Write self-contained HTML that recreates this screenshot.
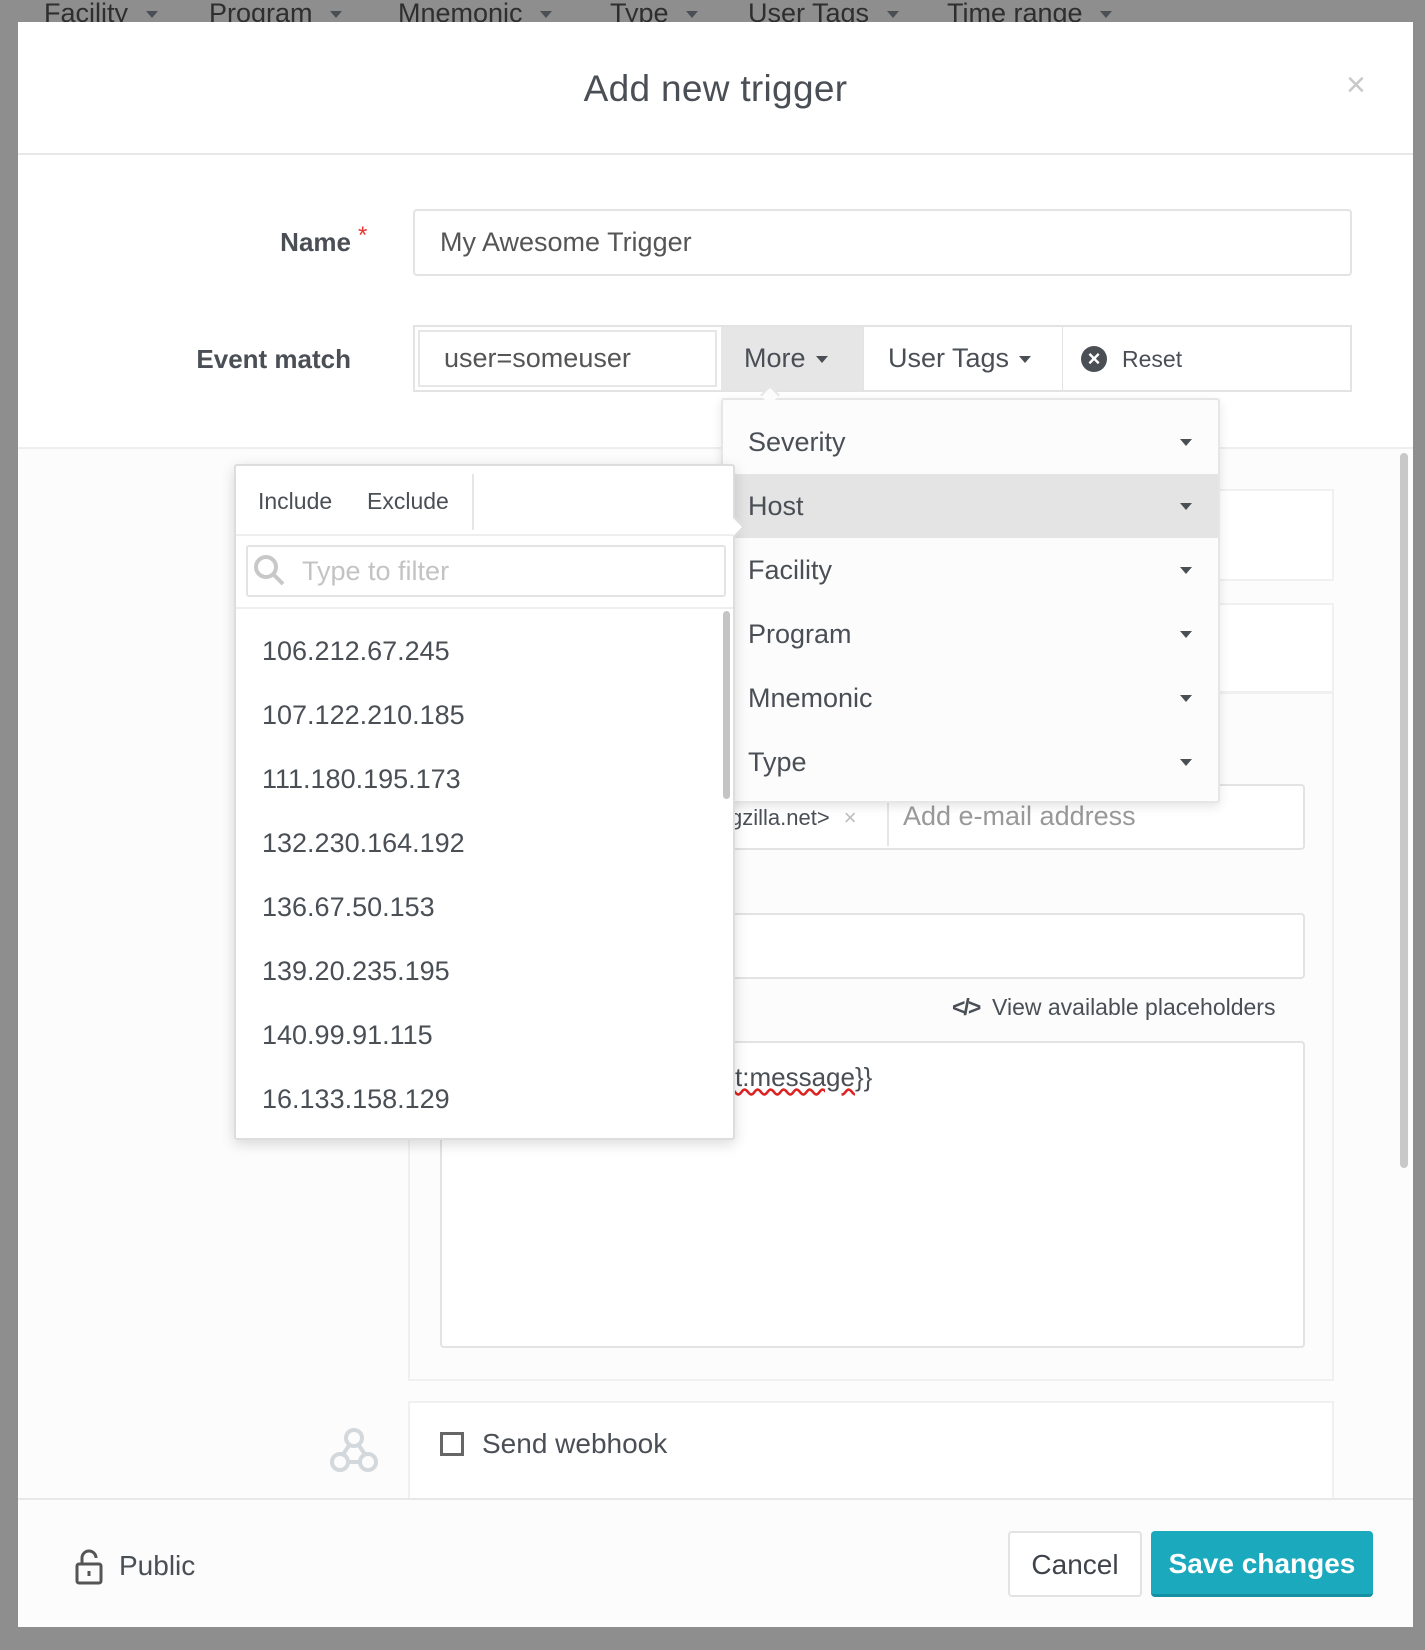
<!DOCTYPE html>
<html><head><meta charset="utf-8"><style>
*{box-sizing:border-box;margin:0;padding:0}
body{width:1425px;height:1650px;background:#8e8e8e;font-family:"Liberation Sans",sans-serif;color:#4a4f56;position:relative;overflow:hidden}
.a{position:absolute}
.bgbar{left:0;top:0;width:1425px;height:22px;background:#8e8e8e;font-size:27px;color:#2e2e2e;overflow:hidden}
.bgbar span{position:absolute;top:-2px;white-space:nowrap}
.modal{left:18px;top:22px;width:1395px;height:1605px;background:#fcfcfc;overflow:hidden}
.inp{border:2px solid #e3e3e3;border-radius:4px;background:#fff}
.caret{display:inline-block;width:0;height:0;border-left:6px solid transparent;border-right:6px solid transparent;border-top:7px solid #4a4f56;vertical-align:middle;margin-left:10px}
.lbl{font-size:26px;font-weight:bold;color:#4a4f56}
.item{position:absolute;left:0;width:100%;height:64px;font-size:27px;padding-left:25px;line-height:64px}
.item .caret{position:absolute;right:26px;top:29px}
.ip{position:absolute;left:26px;font-size:27px;color:#4a4f56}
</style></head><body>
<div class="a bgbar">
<span style="left:44px">Facility <i class="caret"></i></span>
<span style="left:209px">Program <i class="caret"></i></span>
<span style="left:398px">Mnemonic <i class="caret"></i></span>
<span style="left:610px">Type <i class="caret"></i></span>
<span style="left:748px">User Tags <i class="caret"></i></span>
<span style="left:947px">Time range <i class="caret"></i></span>
</div>
<div class="a modal">
 <div class="a" style="left:0;top:0;width:1395px;height:426px;background:#fff"></div>
 <div class="a" style="left:0;top:131px;width:1395px;height:2px;background:#e6e8ea"></div>
 <div class="a" style="left:0;top:0;width:1395px;height:131px;text-align:center;line-height:134px;font-size:37px;color:#4a4f56;letter-spacing:0.3px">Add new trigger</div>
 <div class="a" style="left:1328px;top:44px;font-size:34px;color:#c8c8c8">×</div>
 <div class="a" style="left:0;top:425px;width:1395px;height:2px;background:#eceef0"></div>

 <div class="a lbl" style="right:1062px;top:205px">Name</div>
 <div class="a" style="left:340px;top:200px;color:#e33;font-size:24px">*</div>
 <div class="a inp" style="left:395px;top:187px;width:939px;height:67px;font-size:27px;line-height:63px;padding-left:25px;color:#555">My Awesome Trigger</div>

 <div class="a lbl" style="right:1062px;top:322px">Event match</div>
 <div class="a" style="left:395px;top:303px;width:939px;height:67px;border:2px solid #e3e3e3;background:#fff"></div>
 <div class="a" style="left:400px;top:308px;width:299px;height:57px;border:2px solid #e6e6e6;font-size:27px;line-height:53px;padding-left:24px;color:#555">user=someuser</div>
 <div class="a" style="left:703px;top:305px;width:142px;height:63px;background:#e6e6e6;font-size:27px;line-height:63px;padding-left:23px">More<i class="caret"></i></div>
 <div class="a" style="left:845px;top:305px;width:1px;height:63px;background:#e3e3e3"></div>
 <div class="a" style="left:846px;top:305px;width:198px;height:63px;font-size:27px;line-height:63px;padding-left:24px">User Tags<i class="caret"></i></div>
 <div class="a" style="left:1044px;top:305px;width:1px;height:63px;background:#e3e3e3"></div>
 <div class="a" style="left:1063px;top:324px;width:26px;height:26px;border-radius:50%;background:#4a4f56;color:#fff;font-size:22px;line-height:25px;text-align:center;font-weight:bold">×</div>
 <div class="a" style="left:1104px;top:324px;font-size:23px">Reset</div>

 <!-- background content -->
 <div class="a" style="left:390px;top:467px;width:926px;height:92px;background:#fff;border:2px solid #f0f0f0"></div>
 <div class="a" style="left:390px;top:581px;width:926px;height:90px;background:#fff;border:2px solid #f0f0f0"></div>
 <div class="a" style="left:390px;top:670px;width:926px;height:689px;background:#fcfcfc;border:2px solid #f0f0f0"></div>
 <div class="a inp" style="left:424px;top:762px;width:863px;height:66px"></div>
 <div class="a" style="left:712px;top:783px;font-size:22px">gzilla.net&gt; <span style="color:#bbb;margin-left:8px">×</span></div>
 <div class="a" style="left:869px;top:766px;width:2px;height:58px;background:#e6e6e6"></div>
 <div class="a" style="left:885px;top:779px;font-size:27px;color:#999">Add e-mail address</div>
 <div class="a inp" style="left:424px;top:891px;width:863px;height:66px"></div>
 <div class="a" style="left:934px;top:972px;font-size:23px;color:#4a4f56"><b style="letter-spacing:-2px">&lt;/&gt;</b>&nbsp; View available placeholders</div>
 <div class="a inp" style="left:422px;top:1019px;width:865px;height:307px"></div>
 <div class="a" style="left:717px;top:1040px;font-size:26px"><span style="text-decoration:underline wavy #d22">t:message</span>}}</div>
 <div class="a" style="left:390px;top:1379px;width:926px;height:100px;background:#fff;border:2px solid #f0f0f0"></div>
 <div class="a" style="left:422px;top:1410px;width:24px;height:24px;border:3px solid #666"></div>
 <div class="a" style="left:464px;top:1406px;font-size:28px;color:#4a4f56">Send webhook</div>
 <svg class="a" style="left:310px;top:1402px" width="52" height="52" viewBox="0 0 52 52" fill="none" stroke="#d3d8dd" stroke-width="4"><circle cx="26" cy="14" r="8"/><circle cx="12" cy="38" r="8"/><circle cx="40" cy="38" r="8"/><path d="M22 20 L14 32 M20 38 H34 M30 20 L38 32"/></svg>

 <!-- More menu -->
 <div class="a" style="left:703px;top:376px;width:499px;height:405px;background:#fcfcfc;border:2px solid #e6e6e6;border-radius:3px;box-shadow:0 4px 10px rgba(0,0,0,.1)">
  <div class="item" style="top:10px">Severity<i class="caret"></i></div>
  <div class="item" style="top:74px;background:#e4e4e4">Host<i class="caret"></i></div>
  <div class="item" style="top:138px">Facility<i class="caret"></i></div>
  <div class="item" style="top:202px">Program<i class="caret"></i></div>
  <div class="item" style="top:266px">Mnemonic<i class="caret"></i></div>
  <div class="item" style="top:330px">Type<i class="caret"></i></div>
 </div>
 <div class="a" style="left:745px;top:366px;width:14px;height:14px;background:#fcfcfc;border-left:2px solid #e6e6e6;border-top:2px solid #e6e6e6;transform:rotate(45deg)"></div>

 <!-- filter popup -->
 <div class="a" style="left:216px;top:442px;width:501px;height:676px;background:#fff;border:2px solid #ddd;border-radius:3px;box-shadow:0 4px 14px rgba(0,0,0,.15)">
  <div class="a" style="left:22px;top:22px;font-size:23px;color:#4a4f56">Include</div>
  <div class="a" style="left:131px;top:22px;font-size:23px;color:#4a4f56">Exclude</div>
  <div class="a" style="left:236px;top:8px;width:2px;height:56px;background:#e6e6e6"></div>
  <div class="a" style="left:0;top:68px;width:100%;height:2px;background:#eee"></div>
  <div class="a inp" style="left:10px;top:79px;width:480px;height:52px;border-radius:3px"></div>
  <svg class="a" style="left:17px;top:88px" width="34" height="34" viewBox="0 0 34 34" fill="none" stroke="#c8c8c8" stroke-width="4"><circle cx="13" cy="13" r="10"/><path d="M20 20 L30 30"/></svg>
  <div class="a" style="left:66px;top:90px;font-size:27px;color:#c3c3c3">Type to filter</div>
  <div class="a" style="left:0;top:141px;width:100%;height:2px;background:#eee"></div>
  <div class="a" style="left:487px;top:145px;width:7px;height:188px;background:#c4c4c4;border-radius:4px"></div>
  <div class="ip" style="top:170px">106.212.67.245</div>
  <div class="ip" style="top:234px">107.122.210.185</div>
  <div class="ip" style="top:298px">111.180.195.173</div>
  <div class="ip" style="top:362px">132.230.164.192</div>
  <div class="ip" style="top:426px">136.67.50.153</div>
  <div class="ip" style="top:490px">139.20.235.195</div>
  <div class="ip" style="top:554px">140.99.91.115</div>
  <div class="ip" style="top:618px">16.133.158.129</div>
 </div>
 <div class="a" style="left:710px;top:498px;width:14px;height:14px;background:#fff;border-right:2px solid #ddd;border-top:2px solid #ddd;transform:rotate(45deg)"></div>

 <div class="a" style="left:1382px;top:431px;width:8px;height:715px;background:#c8c8c8;border-radius:4px"></div>

 <!-- footer -->
 <div class="a" style="left:0;top:1476px;width:1395px;height:130px;background:#fcfcfc;border-top:2px solid #e6e8ea"></div>
 <svg class="a" style="left:56px;top:1527px" width="32" height="36" viewBox="0 0 32 36" fill="none" stroke="#555" stroke-width="3"><rect x="3" y="15" width="24" height="19" rx="2"/><path d="M8 15 V9 a7 7 0 0 1 14 0"/><path d="M15 22 v5"/></svg>
 <div class="a" style="left:101px;top:1528px;font-size:28px;color:#4a4f56">Public</div>
 <div class="a" style="left:990px;top:1509px;width:134px;height:66px;border:2px solid #e3e3e3;border-radius:4px;background:#fff;font-size:28px;text-align:center;line-height:64px;color:#3f444a">Cancel</div>
 <div class="a" style="left:1133px;top:1509px;width:222px;height:66px;border-radius:4px;background:#1ba9bd;border-bottom:3px solid #1590a2;font-size:28px;text-align:center;line-height:66px;color:#fff;font-weight:bold">Save changes</div>
</div>
</body></html>
